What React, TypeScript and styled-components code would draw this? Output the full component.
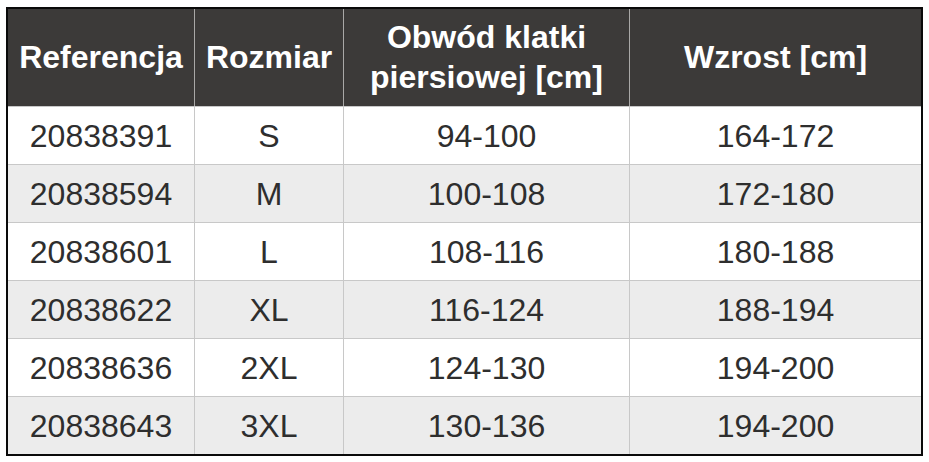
import * as React from 'react';
import styled, { createGlobalStyle } from 'styled-components';

const GlobalStyle = createGlobalStyle`
  html, body {
    margin: 0;
    padding: 0;
    background: #ffffff;
  }
  body {
    font-family: "Liberation Sans", Arial, sans-serif;
  }
  * {
    box-sizing: border-box;
  }
`;

const COLUMNS = '186px 149px 286px 292px';

const Page = styled.div`
  padding: 7px 0 0 6px;
`;

const Table = styled.div`
  width: 917px;
  border: 2px solid #0a0a0a;
  display: flex;
  flex-direction: column;
`;

const HeadRow = styled.div`
  display: grid;
  grid-template-columns: ${COLUMNS};
  height: 97px;
  background-color: #3c3a39;
`;

const HeadCell = styled.div`
  display: flex;
  align-items: center;
  justify-content: center;
  text-align: center;
  color: #ffffff;
  font-size: 32px;
  font-weight: bold;
  line-height: 40px;
  padding-bottom: 2px;

  & + & {
    border-left: 1px solid #a9a8a7;
  }
`;

const Row = styled.div<{ $alt: boolean }>`
  display: grid;
  grid-template-columns: ${COLUMNS};
  height: 58px;
  border-top: 1px solid #c8c8c8;
  background-color: ${p => (p.$alt ? '#ececec' : '#ffffff')};
`;

const Cell = styled.div`
  display: flex;
  align-items: center;
  justify-content: center;
  color: #2e2e2e;
  font-size: 32px;
  padding-top: 1px;

  & + & {
    border-left: 1px solid #c8c8c8;
  }
`;

const rows = [
  ['20838391', 'S', '94-100', '164-172'],
  ['20838594', 'M', '100-108', '172-180'],
  ['20838601', 'L', '108-116', '180-188'],
  ['20838622', 'XL', '116-124', '188-194'],
  ['20838636', '2XL', '124-130', '194-200'],
  ['20838643', '3XL', '130-136', '194-200'],
];

export default function App() {
  return (
    <Page>
      <GlobalStyle />
      <Table>
        <HeadRow>
          <HeadCell>Referencja</HeadCell>
          <HeadCell>Rozmiar</HeadCell>
          <HeadCell>Obwód klatki<br />piersiowej [cm]</HeadCell>
          <HeadCell>Wzrost [cm]</HeadCell>
        </HeadRow>
        {rows.map((r, i) => (
          <Row key={r[0]} $alt={i % 2 === 1}>
            {r.map((v, j) => <Cell key={j}>{v}</Cell>)}
          </Row>
        ))}
      </Table>
    </Page>
  );
}
